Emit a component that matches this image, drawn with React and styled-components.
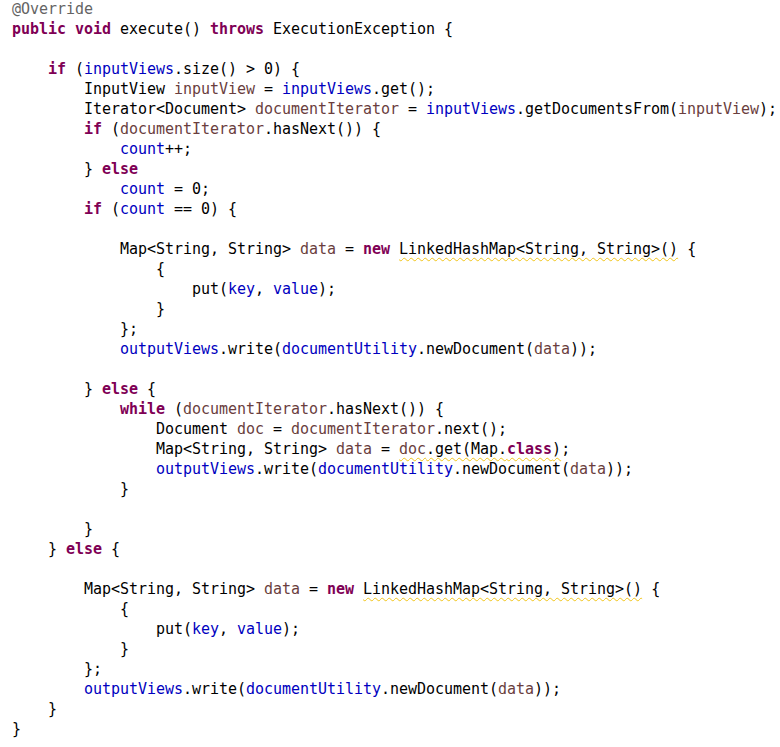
import React from "react";
import styled, { createGlobalStyle } from "styled-components";

const GlobalStyle = createGlobalStyle`
  html, body {
    margin: 0;
    padding: 0;
    background: #ffffff;
  }
`;

const K = (t) => ["kw", t];
const F = (t) => ["field", t];
const L = (t) => ["local", t];
const A = (t) => ["ann", t];
const P = (t) => ["plain", t];
const W = (...parts) => ["warn", parts];

// indent (in spaces) + tokens for each line of the editor
const lines = [
  [0, [A("@Override")]],
  [0, [K("public"), P(" "), K("void"), P(" execute() "), K("throws"), P(" ExecutionException {")]],
  [0, []],
  [4, [K("if"), P(" ("), F("inputViews"), P(".size() > 0) {")]],
  [8, [P("InputView "), L("inputView"), P(" = "), F("inputViews"), P(".get();")]],
  [8, [P("Iterator<Document> "), L("documentIterator"), P(" = "), F("inputViews"), P(".getDocumentsFrom("), L("inputView"), P(");")]],
  [8, [K("if"), P(" ("), L("documentIterator"), P(".hasNext()) {")]],
  [12, [F("count"), P("++;")]],
  [8, [P("} "), K("else")]],
  [12, [F("count"), P(" = 0;")]],
  [8, [K("if"), P(" ("), F("count"), P(" == 0) {")]],
  [0, []],
  [12, [P("Map<String, String> "), L("data"), P(" = "), K("new"), P(" "), W(P("LinkedHashMap<String, String>()")), P(" {")]],
  [16, [P("{")]],
  [20, [P("put("), F("key"), P(", "), F("value"), P(");")]],
  [16, [P("}")]],
  [12, [P("};")]],
  [12, [F("outputViews"), P(".write("), F("documentUtility"), P(".newDocument("), L("data"), P("));")]],
  [0, []],
  [8, [P("} "), K("else"), P(" {")]],
  [12, [K("while"), P(" ("), L("documentIterator"), P(".hasNext()) {")]],
  [16, [P("Document "), L("doc"), P(" = "), L("documentIterator"), P(".next();")]],
  [16, [P("Map<String, String> "), L("data"), P(" = "), W(L("doc"), P(".get(Map."), K("class"), P(")")), P(";")]],
  [16, [F("outputViews"), P(".write("), F("documentUtility"), P(".newDocument("), L("data"), P("));")]],
  [12, [P("}")]],
  [0, []],
  [8, [P("}")]],
  [4, [P("} "), K("else"), P(" {")]],
  [0, []],
  [8, [P("Map<String, String> "), L("data"), P(" = "), K("new"), P(" "), W(P("LinkedHashMap<String, String>()")), P(" {")]],
  [12, [P("{")]],
  [16, [P("put("), F("key"), P(", "), F("value"), P(");")]],
  [12, [P("}")]],
  [8, [P("};")]],
  [8, [F("outputViews"), P(".write("), F("documentUtility"), P(".newDocument("), L("data"), P("));")]],
  [4, [P("}")]],
  [0, [P("}")]],
];

const tokenColors = {
  kw: "#7f0055",
  field: "#0000c0",
  local: "#6a3e3e",
  ann: "#646464",
  plain: "#000000",
};

const Editor = styled.pre`
  margin: 0;
  padding: 0 0 0 12px;
  font-family: "DejaVu Sans Mono", "Liberation Mono", monospace;
  font-size: 15px;
  letter-spacing: -0.03px;
  line-height: 20px;
  color: #000;
  background: #fff;
  width: 780px;
  height: 747px;
  overflow: hidden;
  box-sizing: border-box;
  margin-top: -1px;
`;

const Line = styled.div`
  height: 20px;
  white-space: pre;
`;

const Token = styled.span`
  color: ${(p) => tokenColors[p.$kind]};
  font-weight: ${(p) => (p.$kind === "kw" ? "bold" : "normal")};
`;

const Warning = styled.span`
  text-decoration-line: underline;
  text-decoration-style: wavy;
  text-decoration-color: #f0c419;
  text-decoration-thickness: 1px;
  text-underline-offset: 3px;
`;

const renderToken = ([kind, value], i) =>
  kind === "warn" ? (
    <Warning key={i}>{value.map(renderToken)}</Warning>
  ) : (
    <Token key={i} $kind={kind}>
      {value}
    </Token>
  );

export default function App() {
  return (
    <>
      <GlobalStyle />
      <Editor>
        {lines.map(([indent, tokens], i) => (
          <Line key={i}>
            {" ".repeat(indent)}
            {tokens.map(renderToken)}
          </Line>
        ))}
      </Editor>
    </>
  );
}
